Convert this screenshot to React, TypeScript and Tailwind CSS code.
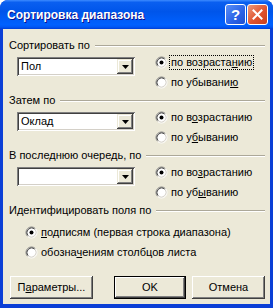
import React from 'react'

const font = { fontFamily: '"Liberation Sans", Arial, sans-serif' }

function Radio({ checked }: { checked?: boolean }) {
  return (
    <svg width="13" height="13" viewBox="0 0 13 13" className="shrink-0">
      <circle cx="6.5" cy="6.5" r="5" fill="#fff" />
      <path d="M2.61 10.39 A5.5 5.5 0 0 1 10.39 2.61" fill="none" stroke="#808080" strokeWidth="1" />
      <path d="M3.32 9.68 A4.5 4.5 0 0 1 9.68 3.32" fill="none" stroke="#404040" strokeWidth="1" />
      <path d="M10.39 2.61 A5.5 5.5 0 0 1 2.61 10.39" fill="none" stroke="#ffffff" strokeWidth="1" />
      <path d="M9.68 3.32 A4.5 4.5 0 0 1 3.32 9.68" fill="none" stroke="#d4d0c8" strokeWidth="1" />
      {checked && <circle cx="6.5" cy="6.5" r="2" fill="#000" />}
    </svg>
  )
}

function RadioRow({ checked, focus, children }: { checked?: boolean; focus?: boolean; children: React.ReactNode }) {
  return (
    <div className="h-[16px] flex items-center">
      <Radio checked={checked} />
      <span
        className={`ml-[1px] px-[1px] leading-[13px] border border-dotted ${focus ? 'border-black' : 'border-transparent'}`}
      >
        {children}
      </span>
    </div>
  )
}

function Combo({ value }: { value: string }) {
  return (
    <div className="mt-[3px] ml-[8px] w-[118px] h-[19px] bg-white flex items-center shadow-[inset_1px_1px_#808080,inset_-1px_-1px_#fff,inset_2px_2px_#404040,inset_-2px_-2px_#d4d0c8]">
      <span className="flex-1 pl-[4px] leading-[13px]">{value}</span>
      <div className="w-[16px] h-[15px] mr-[2px] bg-[#ece9d8] flex items-center justify-center shadow-[inset_-1px_-1px_#404040,inset_1px_1px_#ece9d8,inset_-2px_-2px_#808080,inset_2px_2px_#fff]">
        <svg width="7" height="4" viewBox="0 0 7 4">
          <path d="M0 0 H7 L3.5 4 Z" fill="#000" />
        </svg>
      </div>
    </div>
  )
}

function Header({ label }: { label: string }) {
  return (
    <div className="h-[13px] flex items-center leading-[13px]">
      <span>{label}</span>
      <div className="flex-1 ml-[5px] h-[2px] border-t border-t-[#aca899] border-b border-b-white" />
    </div>
  )
}

function SortSection({ label, value, up, down, focus }: { label: string; value: string; up: React.ReactNode; down: React.ReactNode; focus?: boolean }) {
  return (
    <div className="h-[55px]">
      <Header label={label} />
      <div className="mt-[2px] flex">
        <Combo value={value} />
        <div className="ml-[20px] flex flex-col gap-[4px]">
          <RadioRow checked focus={focus}>{up}</RadioRow>
          <RadioRow>{down}</RadioRow>
        </div>
      </div>
    </div>
  )
}

function Btn({ children, def, w }: { children: React.ReactNode; def?: boolean; w: string }) {
  return (
    <div className={`${w} h-[23px] ${def ? 'border border-black' : ''}`}>
      <div className="w-full h-full bg-[#ece9d8] flex items-center justify-center leading-[13px] shadow-[inset_-1px_-1px_#404040,inset_1px_1px_#fff,inset_-2px_-2px_#808080,inset_2px_2px_#ece9d8]">
        {children}
      </div>
    </div>
  )
}

export default function App() {
  return (
    <div className="w-[273px] h-[308px] bg-[#0b3fd6] rounded-t-[8px] flex flex-col text-[11px] text-black" style={font}>
      {/* title bar */}
      <div className="h-[29px] shrink-0 rounded-t-[8px] flex items-center pl-[7px] pr-[5px] bg-[linear-gradient(to_bottom,#3d8bff_0%,#0a5ff0_8%,#0055ea_40%,#0061ff_85%,#0058f5_93%,#003ed6_100%)]">
        <span className="flex-1 text-white font-bold text-[12px] [text-shadow:1px_1px_#0f1089] pt-[1px]">
          Сортировка диапазона
        </span>
        <div className="w-[21px] h-[21px] rounded-[3px] border border-white bg-[linear-gradient(135deg,#5a8ff7,#2a62e6_60%,#1d4fd0)] flex items-center justify-center text-white font-bold text-[15px] leading-none">
          ?
        </div>
        <div className="ml-[1px] w-[21px] h-[21px] rounded-[3px] border border-white bg-[linear-gradient(135deg,#ec9a7c,#e0532f_55%,#c8401c)] flex items-center justify-center">
          <svg width="11" height="11" viewBox="0 0 11 11">
            <path d="M1.5 1.5 L9.5 9.5 M9.5 1.5 L1.5 9.5" stroke="#fff" strokeWidth="2" strokeLinecap="square" />
          </svg>
        </div>
      </div>

      {/* body */}
      <div className="mx-[3px] mb-[4px] flex-1 bg-[#ece9d8] pt-[10px] pl-[6px] pr-[5px] pb-[5px] flex flex-col">
        <SortSection
          label="Сортировать по"
          value="Пол"
          focus
          up={<>по возраста<u>н</u>ию</>}
          down={<>по убывани<u>ю</u></>}
        />
        <SortSection
          label="Затем по"
          value="Оклад"
          up={<>по в<u>о</u>зрастанию</>}
          down={<>по у<u>б</u>ыванию</>}
        />
        <SortSection
          label="В последнюю очередь, по"
          value=""
          up={<>по во<u>з</u>растанию</>}
          down={<>по уб<u>ы</u>ванию</>}
        />

        <Header label="Идентифицировать поля по" />
        <div className="mt-[7px] ml-[16px] flex flex-col gap-[4px]">
          <RadioRow checked><u>п</u>одписям (первая строка диапазона)</RadioRow>
          <RadioRow>обозна<u>ч</u>ениям столбцов листа</RadioRow>
        </div>

        <div className="mt-[16px] ml-[1px] flex">
          <Btn w="w-[83px]">П<u>а</u>раметры...</Btn>
          <div className="ml-[21px]">
            <Btn w="w-[72px]" def>OK</Btn>
          </div>
          <div className="ml-[6px]">
            <Btn w="w-[73px]">Отмена</Btn>
          </div>
        </div>
      </div>
    </div>
  )
}
